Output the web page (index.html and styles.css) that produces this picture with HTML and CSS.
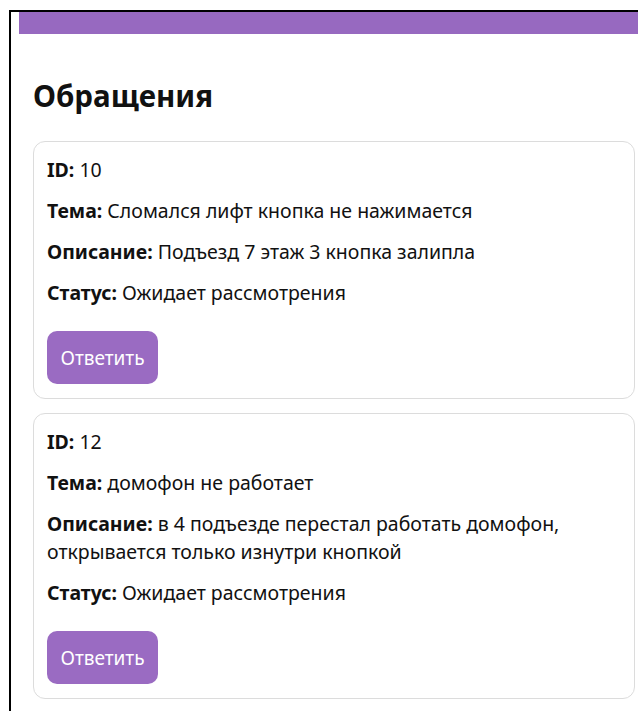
FILE: index.html
```html
<!DOCTYPE html>
<html lang="ru">
<head>
<meta charset="utf-8">
<title>Обращения</title>
<link rel="stylesheet" href="styles.css">
</head>
<body>
<div class="frame">
  <div class="topbar"></div>
  <main class="content">
    <h1 class="title">Обращения</h1>
    <div class="ticket">
      <p class="row"><b>ID:</b> 10</p>
      <p class="row"><b>Тема:</b> Сломался лифт кнопка не нажимается</p>
      <p class="row"><b>Описание:</b> Подъезд 7 этаж 3 кнопка залипла</p>
      <p class="row"><b>Статус:</b> Ожидает рассмотрения</p>
      <button class="reply">Ответить</button>
    </div>
    <div class="ticket">
      <p class="row"><b>ID:</b> 12</p>
      <p class="row"><b>Тема:</b> домофон не работает</p>
      <p class="row"><b>Описание:</b> в 4 подъезде перестал работать домофон, открывается только изнутри кнопкой</p>
      <p class="row"><b>Статус:</b> Ожидает рассмотрения</p>
      <button class="reply">Ответить</button>
    </div>
  </main>
</div>
</body>
</html>
```
FILE: styles.css
```css
html, body {
  margin: 0;
  padding: 0;
  background: #fff;
  overflow: hidden;
}

body {
  font-family: "Noto Sans", "Open Sans", sans-serif;
  color: #111;
}

.frame {
  margin: 10px 0 0 9px;
  border-top: 2px solid #000;
  border-left: 2px solid #000;
  padding-left: 8px;
  min-height: calc(100vh - 12px);
}

.topbar {
  height: 22px;
  background: #9769c0;
}

.content {
  padding: 0 3px 0 14px;
}

.title {
  margin: 44px 0 27px;
  font-size: 29.5px;
  line-height: 36px;
  font-weight: 700;
}

.ticket {
  border: 1px solid #dcdcdc;
  border-radius: 12px;
  padding: 14px 13px 14px;
  margin-bottom: 14px;
}

.row {
  margin: 0 0 13px;
  font-size: 19.5px;
  line-height: 28px;
}

.row b {
  font-weight: 700;
}

.reply {
  margin-top: 24px;
  display: block;
  width: 111px;
  height: 53px;
  border: 0;
  border-radius: 10px;
  background: #9a6bc2;
  color: #fff;
  font-family: inherit;
  font-size: 19px;
  padding: 0;
  cursor: pointer;
}
```
